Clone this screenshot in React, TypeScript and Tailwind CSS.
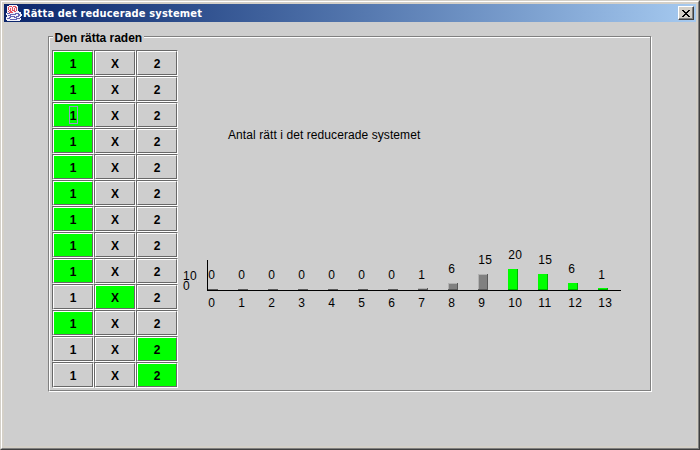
const picks = [0, 0, 0, 0, 0, 0, 0, 0, 0, 1, 0, 2, 2];
const marks = ['1', 'X', '2'];

const bars = [
  { n: 0, top: 289, base: 279 },
  { n: 0, top: 289, base: 279 },
  { n: 0, top: 289, base: 279 },
  { n: 0, top: 289, base: 279 },
  { n: 0, top: 289, base: 279 },
  { n: 0, top: 289, base: 279 },
  { n: 0, top: 289, base: 279 },
  { n: 1, top: 288, base: 279 },
  { n: 6, top: 283, base: 273 },
  { n: 15, top: 274, base: 264 },
  { n: 20, top: 269, base: 259 },
  { n: 15, top: 274, base: 264 },
  { n: 6, top: 283, base: 273 },
  { n: 1, top: 288, base: 279 },
];

function JavaIcon() {
  return (
    <svg width="16" height="16" viewBox="0 0 16 16" shapeRendering="crispEdges" className="shrink-0">
      <path d="M3 0h8v1h1v5h1v1h2v2h1v2h-1v1h-1v1h1v2h-1v1H1v-1H0v-3h1v-2H0V8h1V1h2z" fill="#f2f2fa" />
      <path d="M3 1h3v1H3zM7 1h3v1H7zM2 2h1v3H2zM6 2h1v3H6zM9 2h2v1H9zM4 3h1v2H4zM8 3h1v2H8zM10 3h1v3h-1zM3 5h2v1H3zM6 5h3v1H6zM2 6h1v1H2zM4 6h2v1H4zM8 6h2v1H8zM3 7h4v1H3z" fill="#e4505e" />
      <path d="M1 8h3v1H1zM4 9h6v1H4zM9 8h4v1H9zM12 9h2v2h-2zM10 11h3v1h-3zM2 10h3v1H2zM4 11h5v1H4zM3 12h2v1H3zM8 12h3v1H8zM1 13h3v1H1zM4 14h7v1H4zM10 13h4v1h-4z" fill="#6666b4" />
    </svg>
  );
}

function Cell({ label, on, focus }: { label: string; on: boolean; focus: boolean }) {
  return (
    <button className="block h-[26px] w-[42px] border border-b-white border-l-[#686868] border-r-white border-t-[#686868]">
      <span
        className={`flex h-6 w-10 items-center justify-center border border-b-[#686868] border-l-white border-r-[#686868] border-t-white text-[12px] font-bold leading-none ${on ? 'bg-[#00ff00]' : 'bg-[#cecece]'}`}
      >
        <span className={`flex h-[18px] w-[9px] items-center justify-center pt-px ${focus ? 'border border-[#9999cc] pt-0' : ''}`}>
          {label}
        </span>
      </span>
    </button>
  );
}

function Chart() {
  return (
    <svg
      width="450"
      height="80"
      viewBox="180 240 450 80"
      className="block text-[12px] tracking-[0.4px]"
      fill="#000"
    >
      <text x="183" y="280">10</text>
      <text x="183" y="290">0</text>
      {bars.map((b, i) => {
        const x = 208 + i * 30;
        const hit = i >= 10;
        return (
          <g key={i}>
            <g shapeRendering="crispEdges">
              <rect x={x} y={b.top} width="10" height={290 - b.top} fill={hit ? '#00ff00' : b.n === 0 ? '#686868' : '#808080'} />
              {!hit && b.n > 0 && <path d={`M${x} 290V${b.top}H${x + 10}v1H${x + 1}V290z`} fill="#b2b2b2" />}
              <path d={`M${x + 9} ${b.top}h1V290H${x}v-1h${9}z`} fill={hit ? '#00b200' : '#595959'} />
            </g>
            <text x={x + 0.3} y={b.base}>{b.n}</text>
            <text x={x + 0.3} y="307">{i}</text>
          </g>
        );
      })}
      <path d="M207 260h1v30h413v1H207z" shapeRendering="crispEdges" />
    </svg>
  );
}

export default function App() {
  return (
    <div className="h-[450px] w-[700px] overflow-hidden border border-b-[#404040] border-l-[#d4d0c8] border-r-[#404040] border-t-[#d4d0c8] font-['Liberation_Sans',Arial,sans-serif] text-black">
      <div className="h-[448px] border border-b-[#808080] border-l-white border-r-[#808080] border-t-white bg-[#d4d0c8] p-0.5">
        <div className="flex h-[442px] flex-col bg-[#cecece]">
          <header className="flex h-[18px] shrink-0 items-center bg-linear-to-r from-[#0a246a] to-[#a6caf0] px-0.5">
            <JavaIcon />
            <h1 className="ml-px whitespace-nowrap font-['DejaVu_Sans_Condensed','DejaVu_Sans',sans-serif] text-[11px] font-bold leading-none tracking-[0.16px] text-white">
              Rätta det reducerade systemet
            </h1>
            <button className="ml-auto flex h-[14px] w-4 items-center justify-center border border-b-[#404040] border-l-white border-r-[#404040] border-t-white bg-[#d4d0c8] shadow-[inset_-1px_-1px_0_#808080]">
              <svg width="8" height="7" viewBox="0 0 8 7" shapeRendering="crispEdges">
                <path d="M0 0h2v1h1v1h2V1h1V0h2v1H7v1H6v1H5v1h1v1h1v1h1v1H6V6H5V5H3v1H2v1H0V6h1V5h1V4h1V3H2V2H1V1H0z" />
              </svg>
            </button>
          </header>
          <main className="pl-11 pt-2">
            <section className="flex h-[362px] w-[604px] flex-col">
              <div className="flex h-[7px] w-full items-end">
                <span className="h-px w-[5px] bg-[#808080]" />
                <h2 className="h-[7px] w-[91px] whitespace-nowrap pl-[1.5px] text-[12px] font-bold leading-[16px] tracking-[-0.03px]">Den rätta raden</h2>
                <span className="h-px w-[507px] bg-[#808080]" />
              </div>
              <div className="flex h-[355px] w-[604px] border-b border-l border-r border-b-white border-l-[#808080] border-r-white">
                <div className="flex w-[602px] border-b border-l border-r border-b-[#808080] border-l-white border-r-[#808080]">
                  <div className="relative flex w-full">
                    <span className="absolute left-0 top-0 h-px w-[3px] bg-white" />
                    <span className="absolute right-0 top-0 h-px w-[506px] bg-white" />
                    <div className="flex flex-col pl-0.5 pt-[13px]">
                      {picks.map((pick, row) => (
                        <div key={row} className="flex">
                          {marks.map((m, col) => (
                            <Cell key={m} label={m} on={pick === col} focus={row === 2 && col === 0} />
                          ))}
                        </div>
                      ))}
                    </div>
                    <div className="flex flex-col pl-0.5 pt-[90px]">
                      <p className="ml-[48px] h-[113px] whitespace-nowrap text-[12px] leading-4 tracking-[0.08px]">
                        Antal rätt i det reducerade systemet
                      </p>
                      <Chart />
                    </div>
                  </div>
                </div>
              </div>
            </section>
          </main>
        </div>
      </div>
    </div>
  );
}
